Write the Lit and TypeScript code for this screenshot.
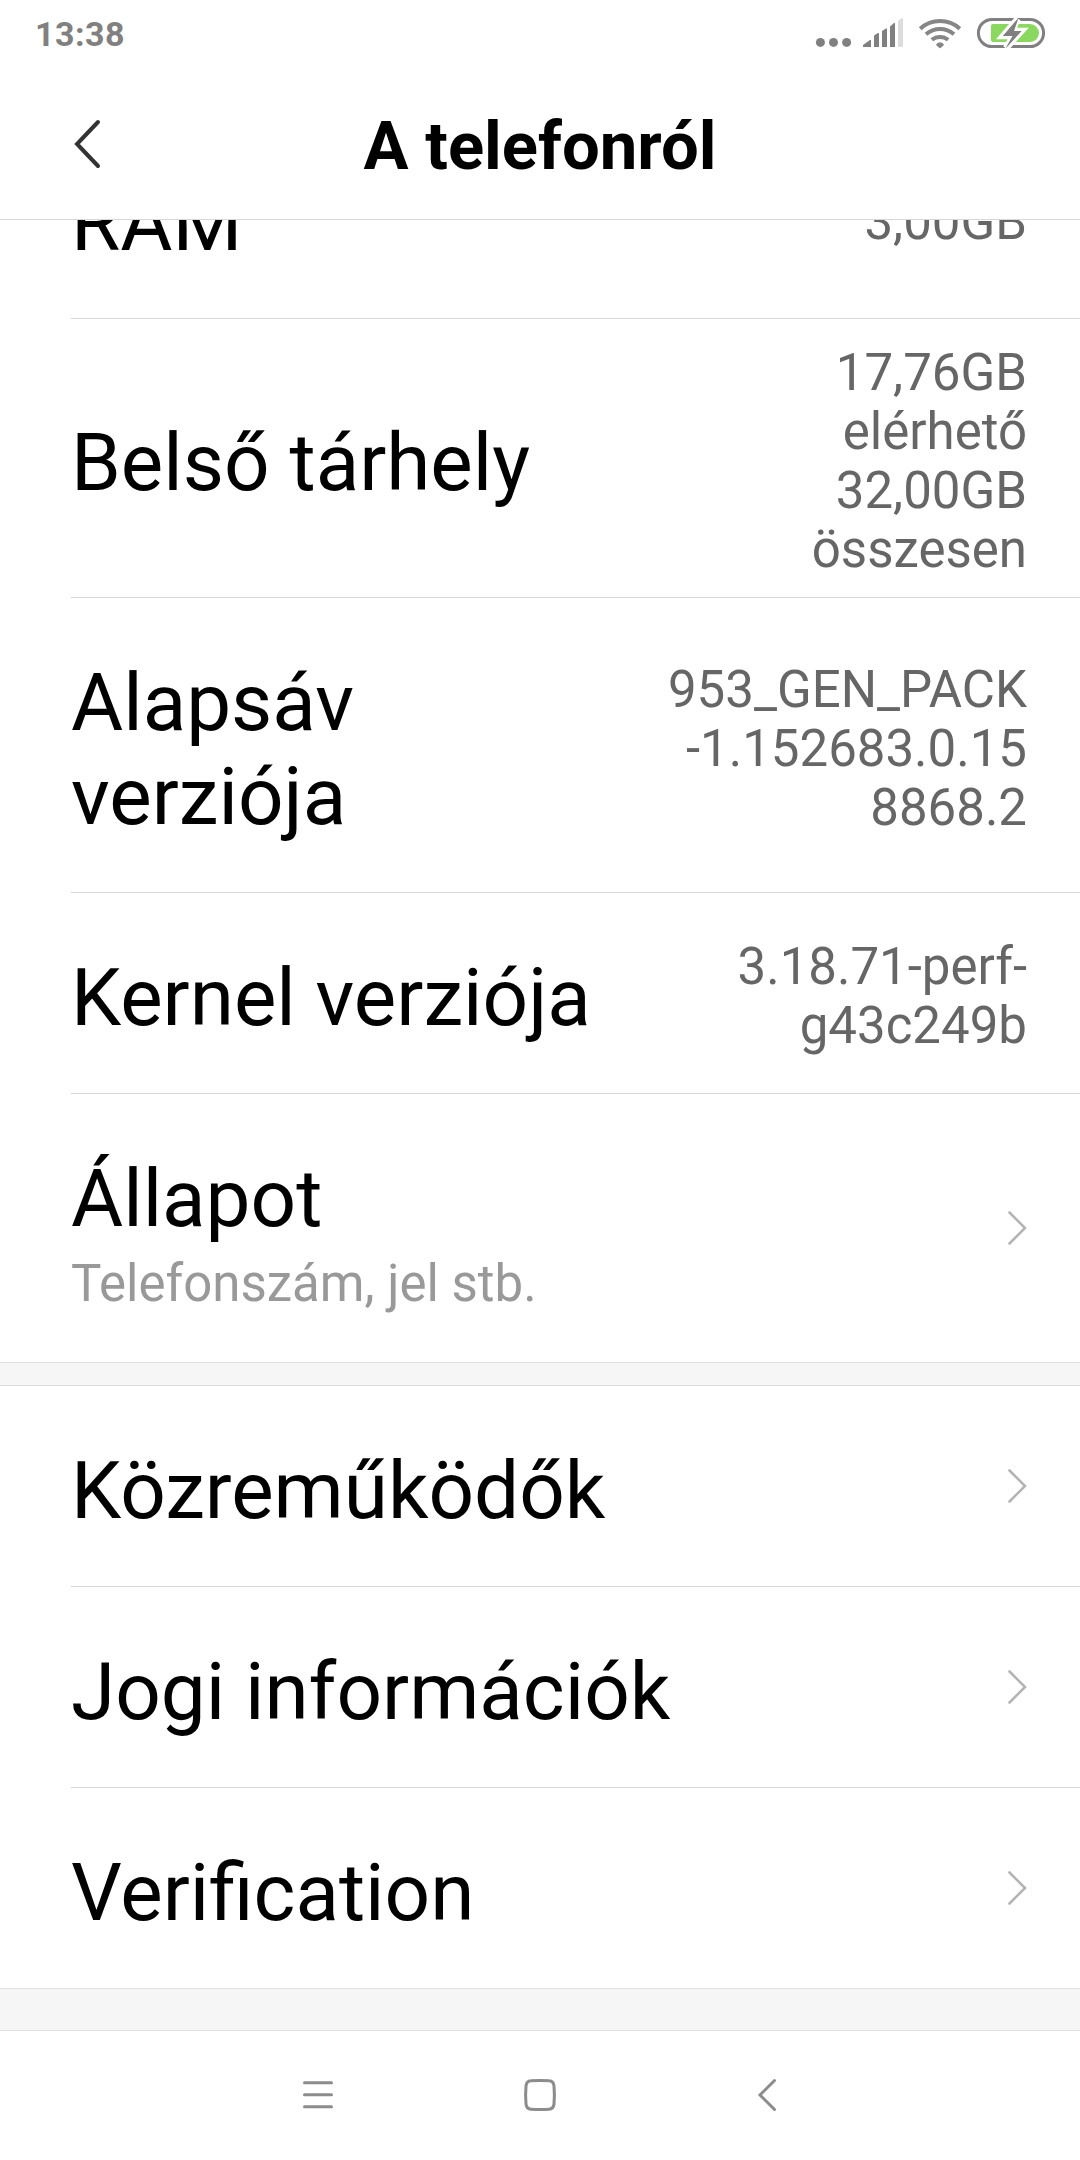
import { LitElement, html, css, svg, nothing } from "lit";
import { customElement, property } from "lit/decorators.js";

interface Item {
  label: string;
  value?: string;
  summary?: string;
  link?: boolean;
}

const DEVICE: Item[] = [
  { label: "RAM", value: "3,00GB" },
  { label: "Belső tárhely", value: "17,76GB\nelérhető\n32,00GB\nösszesen" },
  { label: "Alapsáv\nverziója", value: "953_GEN_PACK\n-1.152683.0.15\n8868.2" },
  { label: "Kernel verziója", value: "3.18.71-perf-\ng43c249b" },
  { label: "Állapot", summary: "Telefonszám, jel stb.", link: true },
];

const LEGAL: Item[] = [
  { label: "Közreműködők", link: true },
  { label: "Jogi információk", link: true },
  { label: "Verification", link: true },
];

@customElement("status-bar")
class StatusBar extends LitElement {
  static styles = css`
    :host {
      display: flex;
      justify-content: space-between;
      height: 68px;
      padding: 0 34px 0 35px;
      box-sizing: border-box;
      color: #808080;
    }
    .time {
      font-weight: 700;
      font-size: 34px;
      line-height: 40px;
      letter-spacing: 0.5px;
      padding-top: 14px;
    }
    .icons {
      width: 231px;
      height: 36px;
      padding-top: 15px;
    }
  `;
  render() {
    return html`
      <span class="time">13:38</span>
      <svg class="icons" viewBox="815 15 231 36">
        ${svg`
        <g fill="#808080">
          <circle cx="820.4" cy="42.4" r="4.5" />
          <circle cx="833.5" cy="42.4" r="4.5" />
          <circle cx="846.6" cy="42.4" r="4.5" />
          <path d="M863 47v-2l7-5h1v7z" />
          <path d="M874 47v-11.5l4-2.5h1v14z" />
          <path d="M882 47v-16l4-2.5h1v18.500z" />
          <path d="M890 47v-20.500l4-3.500h1v24z" />
        </g>
        <path fill="#dcdcdc" d="M898 47v-26l4-3h1v29z" />
        <g fill="none" stroke="#868686" stroke-width="4">
          <path d="M920.200 28.700a29.500 29.500 0 0 1 39.600 0" />
          <path d="M926 34.300a21.500 21.500 0 0 1 28 0" />
          <path d="M931.800 39.800a13 13 0 0 1 16.400 0" />
        </g>
        <path fill="#868686" d="M936.200 44.200q3.800-4 7.600 0q.6 1-3.800 4q-4.400-3-3.800-4z" />
        <rect x="978.400" y="19.400" width="65.200" height="27.200" rx="13.600" fill="none" stroke="#808080" stroke-width="3" />
        <path fill="#8bd860" d="M993 24h37a9 9 0 0 1 0 18h-37q-2 0-2-2v-14q0-2 2-2z" />
        <path fill="#808080" stroke="#fff" stroke-width="6.500" paint-order="stroke" d="M1017.500 19L1003 36h10.500L1006 48L1021.500 31H1012z" />
        <path fill="#808080" d="M1018.500 18L1003 36h9.500L1005.500 48.500L1021.500 31H1014z" />
        `}
      </svg>
    `;
  }
}

@customElement("title-bar")
class TitleBar extends LitElement {
  static styles = css`
    :host {
      display: grid;
      grid-template-columns: 108px 1fr 108px;
      align-items: center;
      height: 152px;
      box-sizing: border-box;
      border-bottom: 1px solid #d8d8d8;
    }
    .back {
      width: 28px;
      height: 50px;
      margin-left: 74px;
    }
    .title {
      margin: 0;
      padding-top: 5px;
      text-align: center;
      font-size: 67px;
      line-height: 78px;
      font-weight: 700;
      color: #000;
    }
  `;
  render() {
    return html`
      <svg class="back" viewBox="0 0 28 50">
        <path d="M24 3L3 25L24 47" fill="none" stroke="#333" stroke-width="4" stroke-linecap="round" />
      </svg>
      <h1 class="title">A telefonról</h1>
    `;
  }
}

@customElement("setting-row")
class SettingRow extends LitElement {
  @property({ attribute: false }) item!: Item;
  static styles = css`
    :host {
      display: flex;
      align-items: center;
      justify-content: space-between;
      min-height: 200px;
      box-sizing: border-box;
      margin-left: 71px;
      padding-right: 53px;
    }
    .label {
      padding-top: 10px;
      font-size: 80px;
      line-height: 94px;
      white-space: pre-line;
      color: #000;
    }
    .summary {
      padding-top: 8px;
      font-size: 51px;
      line-height: 60px;
      color: #999;
    }
    .value {
      padding: 22px 0 16px;
      text-align: right;
      font-size: 51px;
      line-height: 59px;
      white-space: pre-line;
      color: #666;
    }
    .texts.tall {
      padding: 48px 0;
    }
    .chevron {
      width: 20px;
      height: 36px;
      flex: none;
    }
  `;
  render() {
    const { label, value, summary, link } = this.item;
    return html`
      <div class="texts ${summary ? "tall" : ""}">
        <div class="label">${label}</div>
        ${summary ? html`<div class="summary">${summary}</div>` : nothing}
      </div>
      ${value ? html`<div class="value">${value}</div>` : nothing}
      ${link
        ? html`<svg class="chevron" viewBox="0 0 20 36">
            <path d="M2.500 2.500L18 18L2.500 33.500" fill="none" stroke="#b4b4b4" stroke-width="2.600" stroke-linecap="round" />
          </svg>`
        : nothing}
    `;
  }
}

@customElement("nav-bar")
class NavBar extends LitElement {
  static styles = css`
    :host {
      display: flex;
      justify-content: space-between;
      align-items: center;
      height: 130px;
      box-sizing: border-box;
      padding: 0 303px 1px 302px;
      border-top: 1px solid #e0e0e0;
      background: #fff;
    }
    .key {
      width: 34px;
      height: 34px;
    }
    .back {
      width: 20px;
    }
    .home {
      margin-right: 13px;
    }
  `;
  render() {
    return html`
      <svg class="key" viewBox="0 0 34 34">
        <path d="M2.500 4.800h27M2.500 16.800h27M2.500 28.800h27" fill="none" stroke="#8c8c8c" stroke-width="3" stroke-linecap="round" />
      </svg>
      <svg class="key home" viewBox="0 0 34 34">
        <path d="M8 2.800Q17 2.200 26 2.800Q30.500 3 31 8Q31.800 17 31 26Q30.500 31 26 31.200Q17 31.800 8 31.200Q3.500 31 3 26Q2.200 17 3 8Q3.500 3 8 2.800z" fill="none" stroke="#8c8c8c" stroke-width="3" />
      </svg>
      <svg class="key back" viewBox="0 0 20 34">
        <path d="M17.500 2.500L3 17L17.500 31.500" fill="none" stroke="#8c8c8c" stroke-width="3" stroke-linecap="round" />
      </svg>
    `;
  }
}

@customElement("app-root")
class AppRoot extends LitElement {
  static styles = css`
    :host {
      display: flex;
      flex-direction: column;
      width: 1080px;
      height: 2160px;
      overflow: hidden;
      background: #fff;
      font-family: Roboto, "Noto Sans", sans-serif;
    }
    .content {
      flex: 1;
      min-height: 0;
      overflow: hidden;
      background: #f6f6f6;
    }
    .group {
      background: #fff;
      border-bottom: 1px solid #e0e0e0;
    }
    .scrolled {
      margin-top: -102px;
    }
    .next {
      margin-top: 22px;
      border-top: 1px solid #dadada;
    }
    .divider {
      height: 1px;
      margin-left: 71px;
      background: #d8d8d8;
    }
    .roomy {
      min-height: 294px;
    }
    .storage {
      min-height: 278px;
    }
  `;
  private rows(items: Item[]) {
    return items.map(
      (item, i) => html`
        ${i ? html`<div class="divider"></div>` : nothing}
        <setting-row
          class=${item.label.includes("\n") ? "roomy" : item.value?.startsWith("17") ? "storage" : ""}
          .item=${item}
        ></setting-row>
      `
    );
  }
  render() {
    return html`
      <status-bar></status-bar>
      <title-bar></title-bar>
      <main class="content">
        <section class="group scrolled">${this.rows(DEVICE)}</section>
        <section class="group next">${this.rows(LEGAL)}</section>
      </main>
      <nav-bar></nav-bar>
    `;
  }
}
